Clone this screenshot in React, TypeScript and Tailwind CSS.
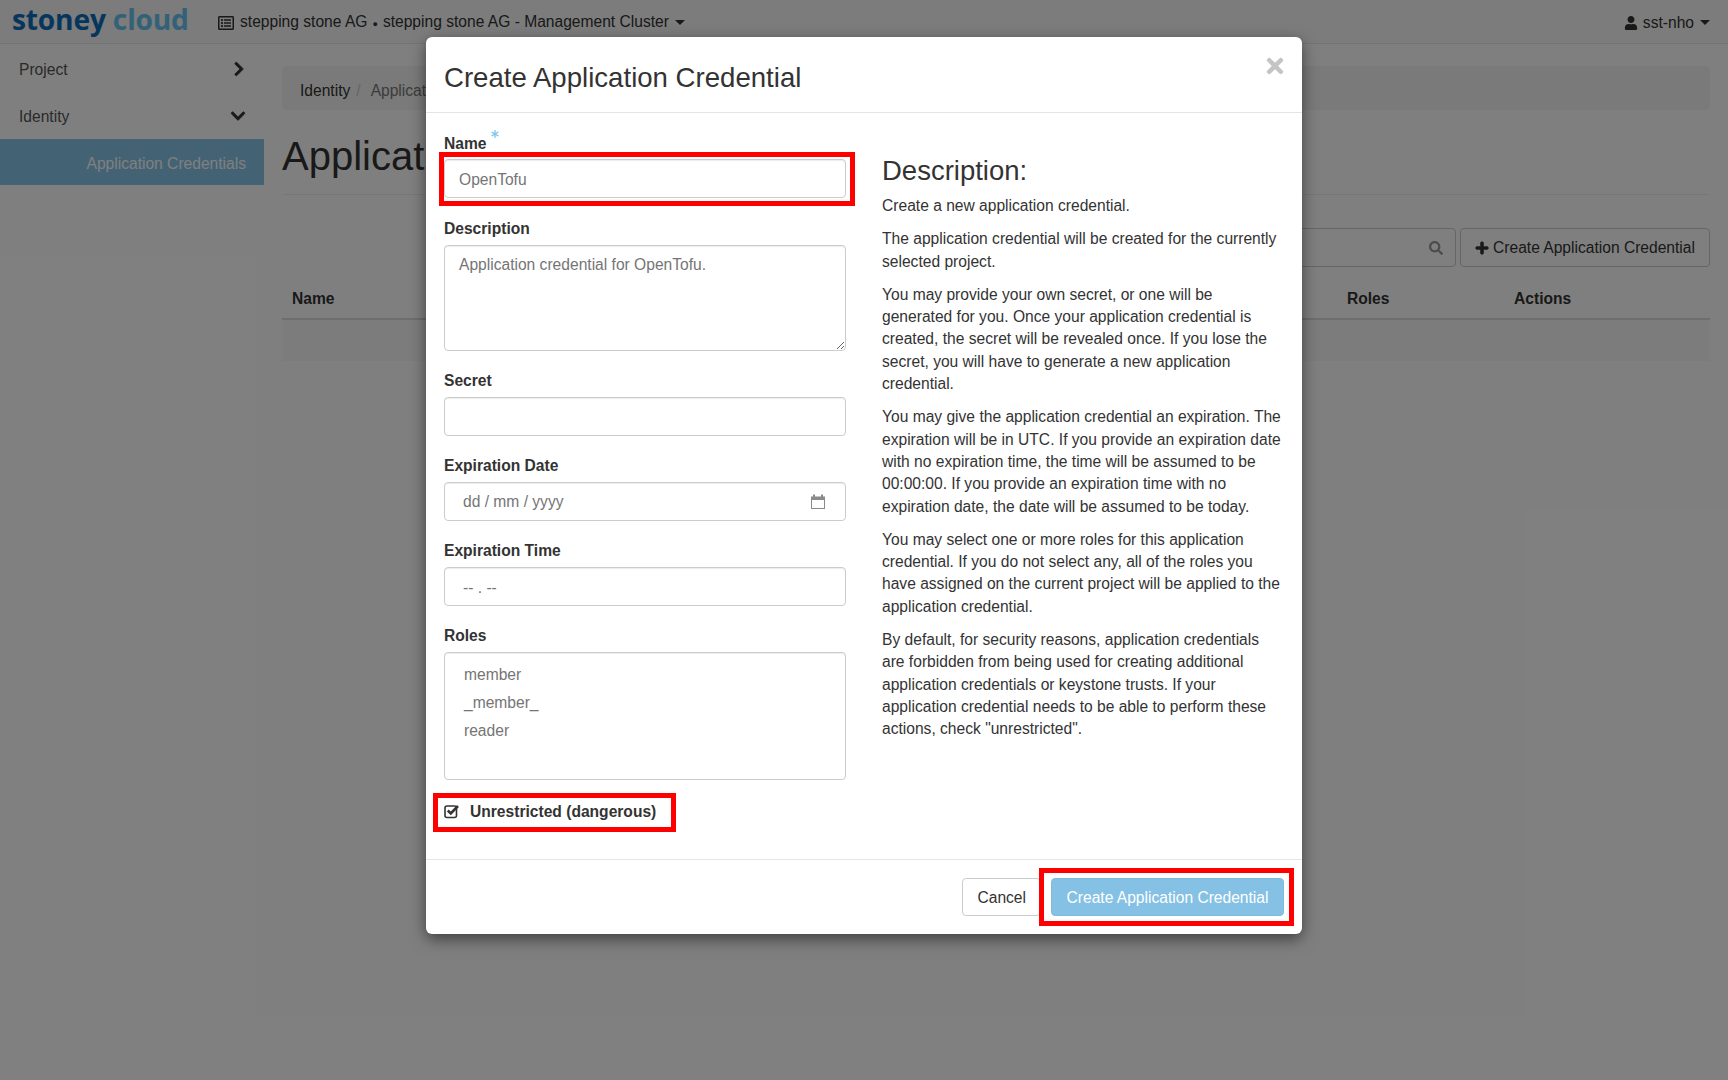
import React from 'react';
import { FaAsterisk, FaChevronDown, FaChevronRight, FaPlus, FaRegListAlt, FaSearch, FaTimes, FaUser } from 'react-icons/fa';

const helpText = [
    'Create a new application credential.',
    'The application credential will be created for the currently selected project.',
    'You may provide your own secret, or one will be generated for you. Once your application credential is created, the secret will be revealed once. If you lose the secret, you will have to generate a new application credential.',
    'You may give the application credential an expiration. The expiration will be in UTC. If you provide an expiration date with no expiration time, the time will be assumed to be 00:00:00. If you provide an expiration time with no expiration date, the date will be assumed to be today.',
    'You may select one or more roles for this application credential. If you do not select any, all of the roles you have assigned on the current project will be applied to the application credential.',
    'By default, for security reasons, application credentials are forbidden from being used for creating additional application credentials or keystone trusts. If your application credential needs to be able to perform these actions, check "unrestricted".',
];

const Caret = () => <span className="ml-[6px] inline-block border-x-[5px] border-t-[5px] border-x-transparent border-t-current align-middle" />;

const Field: React.FC<{ label: string; children: React.ReactNode; required?: boolean }> = ({ label, children, required }) => (
    <div className="mb-[19.6px]">
        <div className="relative mb-[4.2px] h-[22.3px] font-bold">
            {label}
            {required && <FaAsterisk className="absolute left-[47px] top-[-3px] text-[8px] text-[#7cc4ea]" />}
        </div>
        {children}
    </div>
);

const controlBase = 'block w-full rounded-[4px] border border-[#ccc] bg-white text-[#757575] shadow-[inset_0_1px_1px_rgba(0,0,0,0.075)] outline-none';
const controlClass = `${controlBase} h-[39px] px-[14px] pt-[3px]`;

export default function App() {
    return (
        <div className="relative min-h-[1080px] bg-white text-[15.6px] leading-[22.3px] text-[#333] font-['Liberation_Sans',Arial,sans-serif]">
            <nav className="flex h-[44px] items-center border-b border-[#e7e7e7] bg-[#f8f8f8] pl-[12px] pr-[18px]">
                <div className="w-[206px] pb-[5px] text-[28.2px] font-bold tracking-[-0.2px] font-['Open_Sans',sans-serif]">
                    <span className="text-[#0f6cb8]">stoney</span> <span className="text-[#66c4f0]">cloud</span>
                </div>
                <div className="flex items-center pt-[3px]">
                    <FaRegListAlt className="mr-[6px] text-[16px]" />
                    <span>stepping stone AG<span className="mx-[5px] text-[9px]">●</span>stepping stone AG - Management Cluster</span>
                    <Caret />
                </div>
                <div className="ml-auto flex items-center pt-[3px]">
                    <FaUser className="mr-[5px] text-[14px]" />
                    sst-nho
                    <Caret />
                </div>
            </nav>

            <div className="flex">
                <aside className="w-[264px] shrink-0 pt-[3px]">
                    <div className="flex h-[46px] items-center justify-between pl-[19px] pr-[17px] text-[#555]">
                        Project
                        <FaChevronRight stroke="currentColor" strokeWidth={24} className="mb-[3px] text-[16px] text-[#333]" />
                    </div>
                    <div className="flex h-[46px] items-center justify-between pl-[19px] pr-[18px] text-[#555]">
                        <span className="pt-[2px]">Identity</span>
                        <FaChevronDown stroke="currentColor" strokeWidth={24} className="text-[16px] text-[#333]" />
                    </div>
                    <div className="flex h-[46px] items-center justify-end bg-[#86c6ea] pr-[18px] pt-[4px] text-white">Application Credentials</div>
                </aside>

                <main className="flex-1 pl-[18px] pr-[18px] pt-[22px]">
                    <div className="flex h-[44px] items-center rounded-[4px] bg-[#f5f5f5] px-[18px] pt-[6px]">
                        Identity <span className="pl-[6px] pr-[10px] text-[#ccc]">/</span> <span className="text-[#777]">Application Credentials</span>
                    </div>
                    <h1 className="mt-[21px] border-b border-[#eee] pb-[13px] text-[40px] leading-[50px] font-normal">Application Credentials</h1>
                    <div className="mt-[33px] flex justify-end gap-[4px]">
                        <div className="flex h-[39px] w-[300px] items-center justify-end rounded-[4px] border border-[#ccc] pr-[12px] text-[#999]">
                            <FaSearch className="text-[14px]" />
                        </div>
                        <div className="flex h-[39px] w-[250px] items-center justify-center gap-[4px] rounded-[4px] border border-[#ccc] pt-[2px]">
                            <FaPlus stroke="currentColor" strokeWidth={30} className="mb-[2px] text-[14px]" />
                            Create Application Credential
                        </div>
                    </div>
                    <div className="mt-[15px] grid h-[38px] grid-cols-[1055px_167px_1fr] items-center border-b-2 border-[#ddd] pb-[2px] pl-[10px] font-bold">
                        <span>Name</span>
                        <span>Roles</span>
                        <span>Actions</span>
                    </div>
                    <div className="h-[41px] bg-[#f9f9f9]" />
                </main>
            </div>

            <div className="absolute inset-0 bg-black/50" />

            <div className="absolute left-[426px] top-[37px] w-[876px] rounded-[6px] bg-white shadow-[0_5px_15px_rgba(0,0,0,0.5)]">
                <div className="flex h-[76px] items-center border-b border-[#e5e5e5] px-[18px] pt-[6px]">
                    <h4 className="text-[27.6px] font-normal leading-[30px]">Create Application Credential</h4>
                    <FaTimes className="absolute right-[15px] top-[17px] text-[24px] text-[#c4c4c4]" />
                </div>

                <div className="flex gap-[36px] px-[18px] pt-[20px]">
                    <div className="w-[402px]">
                        <Field label="Name" required>
                            <input className={controlClass} value="OpenTofu" readOnly />
                        </Field>
                        <Field label="Description">
                            <textarea className={`${controlBase} h-[106px] px-[14px] pt-[8px]`} defaultValue="Application credential for OpenTofu." />
                        </Field>
                        <Field label="Secret">
                            <input className={controlClass} readOnly />
                        </Field>
                        <Field label="Expiration Date">
                            <div className={`${controlBase} flex h-[39px] items-center justify-between pl-[18px] pr-[19px] pt-[2px]`}>
                                <span>dd / mm / yyyy</span>
                                <svg width="16" height="16" viewBox="0 0 16 16" className="text-[#8a8a8a]">
                                    <path fill="currentColor" d="M3 0.5h2v2h6v-2h2v2h2V15H1V2.5h2v-2zM2 6v8h12V6H2z" />
                                </svg>
                            </div>
                        </Field>
                        <Field label="Expiration Time">
                            <div className={`${controlBase} flex h-[39px] items-center pl-[18px] pt-[3px]`}>-- . --</div>
                        </Field>
                        <Field label="Roles">
                            <div className={`${controlBase} h-[128px] px-[19px] pt-[8px]`}>
                                <div className="h-[28px] leading-[28px]">member</div>
                                <div className="h-[28px] leading-[28px]">_member_</div>
                                <div className="h-[28px] leading-[28px]">reader</div>
                            </div>
                        </Field>
                        <div className="flex items-center pb-[35px] pt-[2px] font-bold">
                            <svg width="16" height="16" viewBox="0 0 16 16" className="mb-[3px] mr-[10px]">
                                <rect x="1" y="3" width="11.5" height="11.5" rx="2" fill="none" stroke="#333" strokeWidth="1.6" />
                                <path d="M3.8 7.5l3 3L14 3" fill="none" stroke="#333" strokeWidth="2.6" />
                            </svg>
                            Unrestricted (dangerous)
                        </div>
                    </div>

                    <div className="w-[402px]">
                        <h3 className="mb-[9px] mt-[23px] text-[27.5px] font-normal leading-[30px]">Description:</h3>
                        {helpText.map((text) => (
                            <p key={text} className="mb-[11px]">{text}</p>
                        ))}
                    </div>
                </div>

                <div className="flex justify-end gap-[10px] border-t border-[#e5e5e5] p-[18px]">
                    <div className="flex h-[38px] items-center rounded-[4px] border border-[#ccc] px-[14px] pt-[3px]">Cancel</div>
                    <div className="flex h-[38px] w-[233px] items-center justify-center rounded-[4px] border border-[#7fbbde] bg-[#85c1e4] pt-[3px] text-white">Create Application Credential</div>
                </div>
            </div>

            {/* red marks from the docs screenshot */}
            <div className="absolute left-[439px] top-[152px] h-[54px] w-[416px] border-[5px] border-[#f00]" />
            <div className="absolute left-[433px] top-[793px] h-[39px] w-[243px] border-[5px] border-[#f00]" />
            <div className="absolute left-[1039px] top-[868px] h-[58px] w-[255px] border-[5px] border-[#f00]" />
        </div>
    );
}
